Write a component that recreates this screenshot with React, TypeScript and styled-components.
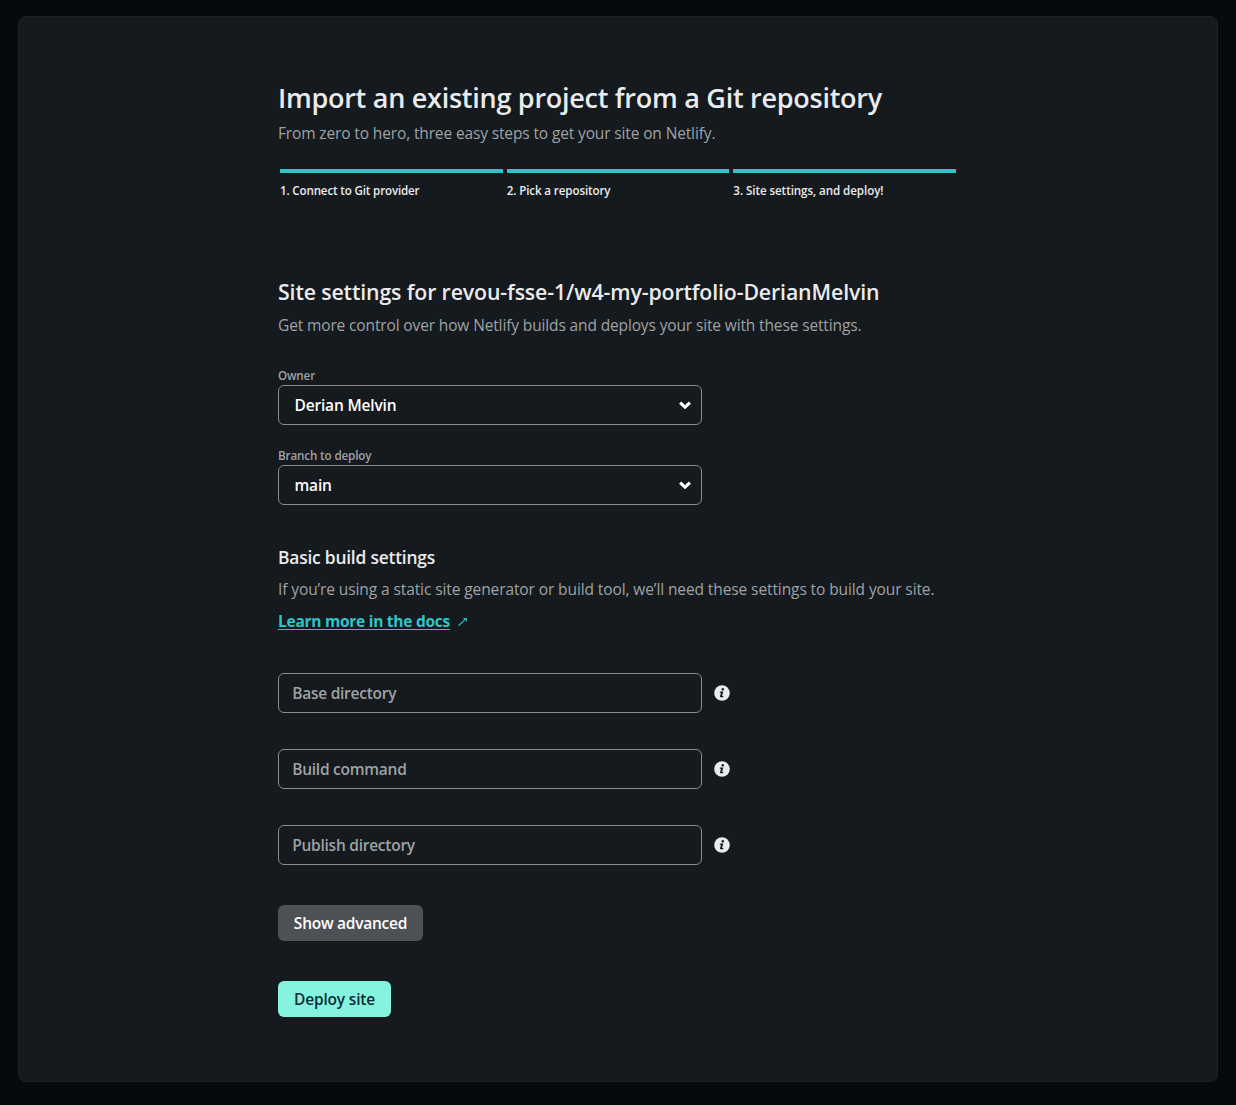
import React from 'react';
import styled, { createGlobalStyle } from 'styled-components';

const colors = {
  page: '#060a0d',
  card: '#151a1e',
  cardBorder: '#1d2226',
  heading: '#e9ebed',
  muted: '#9fa2a5',
  border: '#898b8e',
  teal: '#32c4c9',
  white: '#ffffff',
};

const GlobalStyle = createGlobalStyle`
  *, *::before, *::after { box-sizing: border-box; }
  body {
    margin: 0;
    background: ${colors.page};
    color: ${colors.heading};
    font-family: "Open Sans", "Noto Sans", sans-serif;
    font-size: 15.5px;
    line-height: 24px;
  }
  h1, h2, h3, p, ol { margin: 0; padding: 0; }
  input, select, button { font: inherit; }
`;

type Tracked = { $track?: number };

const Page = styled.main`
  height: 1105px;
  padding: 16px 18px 23px;
`;

const Card = styled.div`
  height: 1066px;
  padding-top: 63px;
  display: flex;
  justify-content: center;
  background: ${colors.card};
  border: 1px solid ${colors.cardBorder};
  border-radius: 8px;
`;

const Column = styled.div`
  width: 680px;
  display: flex;
  flex-direction: column;
  white-space: nowrap;
`;

const Title = styled.h1`
  font-size: 27px;
  line-height: 35px;
  font-weight: 600;
  letter-spacing: -0.265px;
`;

const Lead = styled.p<Tracked>`
  color: ${colors.muted};
  letter-spacing: ${({ $track = -0.135 }) => $track}px;
`;

const Header = styled.header`
  display: flex;
  flex-direction: column;
  gap: 6px;
`;

const Steps = styled.ol`
  display: grid;
  grid-template-columns: repeat(3, 1fr);
  list-style: none;
  margin-top: 24px;
`;

const Step = styled.li<Tracked>`
  margin: 0 2px;
  padding-top: 10px;
  border-top: 4px solid ${colors.teal};
  font-size: 11.625px;
  line-height: 15px;
  font-weight: 600;
  letter-spacing: ${({ $track = -0.1 }) => $track}px;
`;

const Settings = styled.section`
  display: flex;
  flex-direction: column;
  gap: 7px;
  margin-top: 79px;
`;

const SectionTitle = styled.h2`
  font-size: 21.3px;
  line-height: 29px;
  font-weight: 600;
  letter-spacing: -0.13px;
`;

const SelectGroup = styled.div`
  display: flex;
  flex-direction: column;
  gap: 23px;
  margin-top: 31px;
`;

const Field = styled.label`
  display: flex;
  flex-direction: column;
  gap: 2px;
  width: 424px;
`;

const FieldLabel = styled.span`
  font-size: 11.625px;
  line-height: 15px;
  font-weight: 600;
  letter-spacing: -0.12px;
  color: ${colors.muted};
`;

const SelectBox = styled.span`
  display: flex;
  align-items: center;
  justify-content: space-between;
  height: 40px;
  padding: 0 9px 0 15.5px;
  border: 1px solid ${colors.border};
  border-radius: 6px;
  color: ${colors.white};
  font-weight: 600;
  letter-spacing: -0.18px;
`;

const BuildSection = styled.section`
  display: flex;
  flex-direction: column;
  gap: 8px;
  margin-top: 40px;
`;

const SubTitle = styled.h3`
  font-size: 17.4px;
  line-height: 24px;
  font-weight: 600;
  letter-spacing: -0.21px;
`;

const DocsLink = styled.a`
  display: flex;
  align-items: center;
  gap: 8px;
  color: ${colors.teal};
  font-weight: 700;
  letter-spacing: -0.26px;
`;

const LinkText = styled.span`
  text-decoration: underline;
  text-decoration-thickness: 1px;
  text-underline-offset: 2px;
`;

const InputGroup = styled.div`
  display: flex;
  flex-direction: column;
  gap: 36px;
  margin-top: 40px;
`;

const InputRow = styled.div`
  display: flex;
  align-items: center;
  gap: 12px;
`;

const TextInput = styled.input`
  width: 424px;
  height: 40px;
  padding: 0 13.2px;
  border: 1px solid ${colors.border};
  border-radius: 6px;
  background: transparent;
  color: ${colors.white};
  font-weight: 600;
  letter-spacing: -0.25px;
  outline: none;
  &::placeholder { color: ${colors.muted}; opacity: 1; }
`;

const Actions = styled.div`
  display: flex;
  flex-direction: column;
  align-items: flex-start;
  gap: 40px;
  margin-top: 40px;
`;

const Button = styled.button<{ $primary?: boolean }>`
  width: ${({ $primary }) => ($primary ? 113 : 145)}px;
  height: 36px;
  padding: 0;
  border: 0;
  border-radius: 6px;
  font-weight: 600;
  letter-spacing: ${({ $primary }) => ($primary ? -0.18 : -0.25)}px;
  background: ${({ $primary }) => ($primary ? '#86f3df' : '#4d5156')};
  color: ${({ $primary }) => ($primary ? '#0c2d38' : colors.white)};
`;

const Icon = styled.svg`
  display: block;
  flex: none;
`;

const Chevron = () => (
  <Icon width="14" height="14" viewBox="0 0 14 14" fill="none" stroke="#fff" strokeWidth="3">
    <path d="M2.1 4.6 7 9.2l4.9-4.6" />
  </Icon>
);

const Info = () => (
  <Icon width="16" height="16" viewBox="0 0 16 16">
    <circle cx="8" cy="8" r="7.8" fill="#e9ebed" />
    <circle cx="8.8" cy="4.3" r="1.2" fill={colors.card} />
    <path d="M6 6.5h3.3L8.1 11h1.3l-.4 1.2H6.3l-.3-.6 1-3.9H5.8z" fill={colors.card} />
  </Icon>
);

const Arrow = () => (
  <Icon width="9" height="9" viewBox="0 0 9 9" fill="none" stroke={colors.teal}>
    <path d="M.5 8.7 7.8 1.9" strokeWidth="1.1" />
    <path d="M4.2 1.1h4.6v4.2L7.4 2.5z" fill={colors.teal} stroke="none" />
  </Icon>
);

const selects = [
  { label: 'Owner', value: 'Derian Melvin' },
  { label: 'Branch to deploy', value: 'main' },
];

const inputs = ['Base directory', 'Build command', 'Publish directory'];

export default function App() {
  return (
    <>
      <GlobalStyle />
      <Page>
        <Card>
          <Column>
            <Header>
              <Title>Import an existing project from a Git repository</Title>
              <Lead>From zero to hero, three easy steps to get your site on Netlify.</Lead>
            </Header>
            <Steps>
              <Step $track={-0.165}>1. Connect to Git provider</Step>
              <Step $track={-0.12}>2. Pick a repository</Step>
              <Step $track={-0.08}>3. Site settings, and deploy!</Step>
            </Steps>
            <Settings>
              <SectionTitle>Site settings for revou-fsse-1/w4-my-portfolio-DerianMelvin</SectionTitle>
              <Lead>Get more control over how Netlify builds and deploys your site with these settings.</Lead>
            </Settings>
            <SelectGroup>
              {selects.map(({ label, value }) => (
                <Field key={label}>
                  <FieldLabel>{label}</FieldLabel>
                  <SelectBox>
                    {value}
                    <Chevron />
                  </SelectBox>
                </Field>
              ))}
            </SelectGroup>
            <BuildSection>
              <SubTitle>Basic build settings</SubTitle>
              <Lead $track={-0.1}>
                If you’re using a static site generator or build tool, we’ll need these settings to build your site.
              </Lead>
              <DocsLink>
                <LinkText>Learn more in the docs</LinkText>
                <Arrow />
              </DocsLink>
            </BuildSection>
            <InputGroup>
              {inputs.map((name) => (
                <InputRow key={name}>
                  <TextInput placeholder={name} aria-label={name} />
                  <Info />
                </InputRow>
              ))}
            </InputGroup>
            <Actions>
              <Button type="button">Show advanced</Button>
              <Button type="button" $primary>Deploy site</Button>
            </Actions>
          </Column>
        </Card>
      </Page>
    </>
  );
}
